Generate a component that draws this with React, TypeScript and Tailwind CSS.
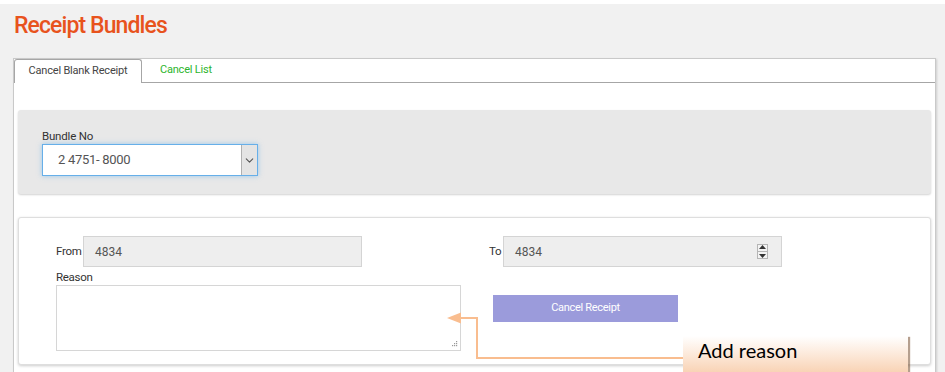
import { ChevronDown } from "lucide-react";

const font = { fontFamily: "Roboto, 'Liberation Sans', sans-serif" };

const ReadOnlyInput = ({ value, spinner }: { value: string; spinner?: boolean }) => (
  <div className="flex h-[31px] w-[279px] items-center justify-between border border-[#d4d4d4] bg-[#eeeeee] pl-[11px] pr-[13px] text-[12px] text-[#555]">
    <span>{value}</span>
    {spinner && (
      <div className="flex h-[15px] w-[11px] flex-col items-center justify-center gap-[2px] border border-[#b5b5b5] bg-[#f3f3f3]">
        <svg width="7" height="4" viewBox="0 0 7 4">
          <path d="M3.5 0 L7 4 H0 Z" fill="#333" />
        </svg>
        <div className="h-px w-[9px] bg-[#b5b5b5]" />
        <svg width="7" height="4" viewBox="0 0 7 4">
          <path d="M0 0 H7 L3.5 4 Z" fill="#333" />
        </svg>
      </div>
    )}
  </div>
);

const App = () => {
  return (
    <div className="relative h-[372px] w-[945px] overflow-hidden border-t-4 border-white bg-[#f1f1f1]" style={font}>
      <h1 className="pl-[14px] pt-[7px] text-[23px] font-medium leading-[30px] tracking-[-0.9px] text-[#e8531d]">Receipt Bundles</h1>

      <div className="ml-[13px] mr-[9px] mt-[17px] h-[320px] border border-[#c9c9c9] bg-white shadow-[1px_1px_2px_rgba(0,0,0,0.15)]">
        {/* tabs */}
        <div className="flex h-[24px] items-end border-b border-[#a6a6a6]">
          <div className="-mb-px flex h-[24px] w-[128px] items-center justify-center rounded-t-[3px] border border-b-0 border-[#a6a6a6] bg-white text-[11px] tracking-[-0.2px] text-[#444]">
            Cancel Blank Receipt
          </div>
          <div className="flex h-[23px] items-center pl-[18px] text-[11px] tracking-[-0.2px] text-[#2db52d]">Cancel List</div>
        </div>

        <div className="px-[4px] pt-[27px]">
          {/* bundle box */}
          <div className="h-[84px] rounded-[3px] bg-[#e8e8e8] pl-[24px] pt-[19px] shadow-[0_1px_2px_rgba(0,0,0,0.18)]">
            <div className="text-[11.5px] leading-[14px] tracking-[-0.2px] text-[#333]">Bundle No</div>
            <div className="mt-[1px] flex h-[32px] w-[216px] border border-[#66afe9] bg-white shadow-[0_0_5px_rgba(102,175,233,0.6)]">
              <div className="flex flex-1 items-center pl-[15px] text-[13px] tracking-[-0.3px] text-[#555]">2 4751- 8000</div>
              <div className="flex w-[16px] items-center justify-center border-l border-[#b0b0b0] bg-[#e4e4e4]">
                <ChevronDown size={13} strokeWidth={2} color="#555" />
              </div>
            </div>
          </div>

          {/* form box */}
          <div className="mt-[23px] h-[148px] rounded-[3px] border border-[#dedede] bg-white pl-[37px] pt-[18px] shadow-[0_1px_3px_rgba(0,0,0,0.2)]">
            <div className="flex gap-[28px]">
              <div className="w-[405px]">
                <div className="flex items-center gap-[3px]">
                  <span className="w-[24px] text-[11.5px] tracking-[-0.3px] text-[#333]">From</span>
                  <ReadOnlyInput value="4834" />
                </div>
                <div className="mt-[3px] text-[11.5px] leading-[14px] tracking-[-0.3px] text-[#333]">Reason</div>
                <div className="relative mt-[1px] h-[66px] w-[405px] border border-[#d6d6d6] bg-white">
                  <svg className="absolute bottom-[2px] right-[2px]" width="7" height="7" viewBox="0 0 7 7">
                    <g fill="#999">
                      <rect x="5" y="0" width="1.2" height="1.2" />
                      <rect x="3" y="2" width="1.2" height="1.2" />
                      <rect x="5" y="2" width="1.2" height="1.2" />
                      <rect x="1" y="4" width="1.2" height="1.2" />
                      <rect x="3" y="4" width="1.2" height="1.2" />
                      <rect x="5" y="4" width="1.2" height="1.2" />
                    </g>
                  </svg>
                </div>
              </div>
              <div>
                <div className="flex items-center gap-[2px]">
                  <span className="w-[12px] text-[11.5px] tracking-[-0.3px] text-[#333]">To</span>
                  <ReadOnlyInput value="4834" spinner />
                </div>
                <button className="ml-[4px] mt-[28px] flex h-[27px] w-[185px] items-center justify-center bg-[#9b9bdb] text-[11px] tracking-[-0.3px] text-white">
                  Cancel Receipt
                </button>
              </div>
            </div>
          </div>
        </div>
      </div>

      {/* annotation arrow */}
      <svg className="absolute left-0 top-0" width="945" height="372" viewBox="0 0 945 372">
        <path d="M684 354 H477 V314 H458" fill="none" stroke="#f9bd8f" strokeWidth="2" />
        <path d="M447 314 L461 308.5 V319.5 Z" fill="#f9bd8f" />
      </svg>

      {/* callout */}
      <div
        className="absolute left-[683px] top-[332px] flex h-[46px] w-[225px] items-start bg-gradient-to-b from-[#ffffff] to-[#f6c7a1] pl-[15px] pt-0 text-[20px] leading-[29px] text-black shadow-[2px_1px_1px_rgba(120,80,50,0.55)]"
        style={{ fontFamily: "Lato, 'Open Sans', sans-serif" }}
      >
        Add reason
      </div>
    </div>
  );
};

export default App;
